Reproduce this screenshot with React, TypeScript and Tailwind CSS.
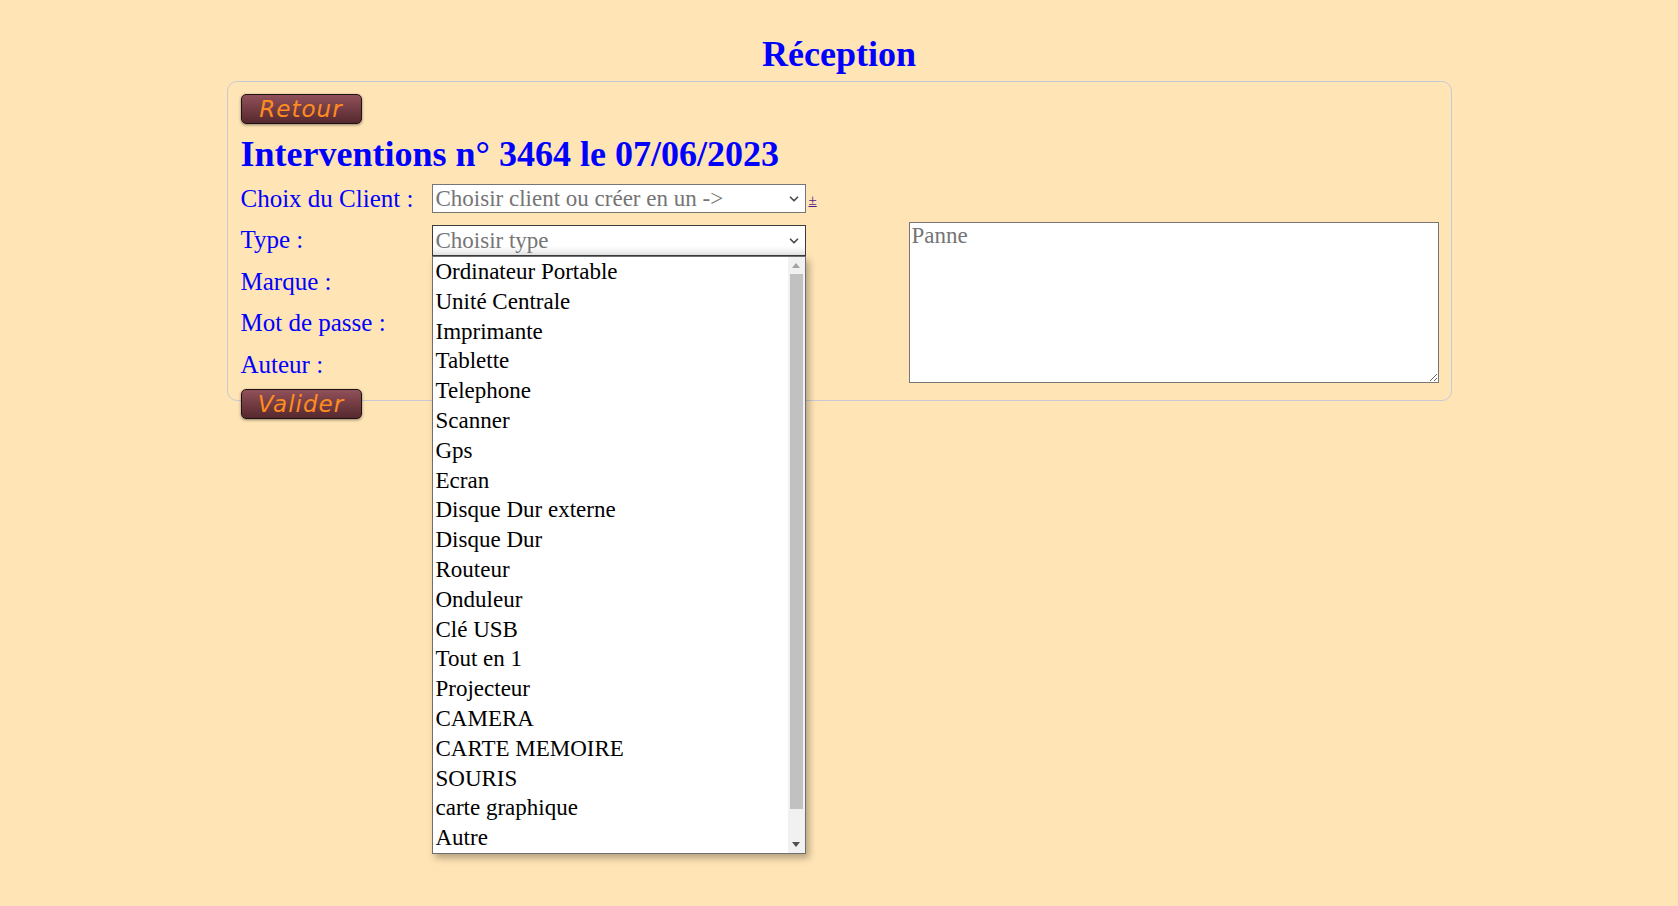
import { ChevronDown } from 'lucide-react'

const TYPES = [
  'Ordinateur Portable',
  'Unité Centrale',
  'Imprimante',
  'Tablette',
  'Telephone',
  'Scanner',
  'Gps',
  'Ecran',
  'Disque Dur externe',
  'Disque Dur',
  'Routeur',
  'Onduleur',
  'Clé USB',
  'Tout en 1',
  'Projecteur',
  'CAMERA',
  'CARTE MEMOIRE',
  'SOURIS',
  'carte graphique',
  'Autre',
]

const serif = "font-['Liberation_Serif','Times_New_Roman',serif]"

function FancyButton({ label }: { label: string }) {
  return (
    <button
      type="button"
      className="h-[30px] w-[121px] rounded-[5px] border border-[#1e1214] bg-gradient-to-b from-[#915059] to-[#56292f] shadow-[0_1px_3px_rgba(0,0,0,0.45)] font-['DejaVu_Sans',sans-serif] text-[23px] italic leading-[28px] tracking-[1px] text-[#ff8c1e]"
    >
      {label}
    </button>
  )
}

function FakeSelect({ text, open }: { text: string; open?: boolean }) {
  return (
    <div
      className={
        open
          ? 'flex h-[31px] w-[374px] items-center justify-between border border-[#3c3c3c] bg-gradient-to-b from-white from-70% to-[#e4e4e4] pl-[3px] pr-[4px]'
          : 'flex h-[29px] w-[374px] items-center justify-between border border-[#767676] bg-white pl-[3px] pr-[4px]'
      }
    >
      <span className="text-[23px] leading-[27px] text-[#757575]">{text}</span>
      <ChevronDown size={14} strokeWidth={3} className="text-[#4d4d4d]" />
    </div>
  )
}

function Label({ text }: { text: string }) {
  return <span className="w-[191px] shrink-0 text-[25px] leading-[29px] text-[#0000ff]">{text}</span>
}

function TypeList() {
  return (
    <div className="absolute left-0 top-full z-10 flex h-[598px] w-[374px] border border-[#6f6f6f] bg-white shadow-[3px_4px_7px_rgba(0,0,0,0.3)]">
      <ul className="flex-1">
        {TYPES.map((t) => (
          <li key={t} className="h-[29.8px] pl-[3px] text-[23px] leading-[29.8px] text-black">
            {t}
          </li>
        ))}
      </ul>
      <div className="flex w-[17px] flex-col bg-[#f1f1f1]">
        <div className="flex h-[17px] items-center justify-center">
          <svg width="8" height="5" viewBox="0 0 8 5"><polygon points="4,0 8,5 0,5" fill="#a3a3a3" /></svg>
        </div>
        <div className="flex-1 px-[2px]">
          <div className="h-[535px] bg-[#c1c1c1]" />
        </div>
        <div className="flex h-[17px] items-center justify-center">
          <svg width="8" height="5" viewBox="0 0 8 5"><polygon points="0,0 8,0 4,5" fill="#505050" /></svg>
        </div>
      </div>
    </div>
  )
}

export default function App() {
  return (
    <div className={`min-h-[906px] w-full bg-[#ffe4b5] ${serif}`}>
      <h1 className="pt-[34px] text-center text-[36px] font-bold leading-[41px] text-[#0000ff]">Réception</h1>

      <div className="mx-auto mt-[6px] h-[320px] w-[1225px] rounded-[10px] border border-[#c6cbd3] pl-[13px] pr-[11px] pt-[12px]">
        <FancyButton label="Retour" />
        <h2 className="mt-[10px] text-[36px] font-bold leading-[41px] text-[#0000ff]">
          Interventions n° 3464 le 07/06/2023
        </h2>

        <div className="mt-[9px] flex items-start">
          <Label text="Choix du Client :" />
          <FakeSelect text="Choisir client ou créer en un ->" />
          <a href="#" className="ml-[3px] mt-[7px] text-[15px] leading-[18px] text-[#551a8b] underline">±</a>
        </div>

        <div className="mt-[9px] flex items-start">
          <div className="w-[565px] shrink-0 pt-[3px]">
            <div className="flex h-[41.5px] items-start">
              <Label text="Type :" />
              <div className="relative">
                <FakeSelect text="Choisir type" open />
                <TypeList />
              </div>
            </div>
            <div className="flex h-[41.5px] items-start">
              <Label text="Marque :" />
              <FakeSelect text="" />
            </div>
            <div className="flex h-[41.5px] items-start">
              <Label text="Mot de passe :" />
              <FakeSelect text="" />
            </div>
            <div className="flex h-[29px] items-start">
              <Label text="Auteur :" />
              <FakeSelect text="" />
            </div>
            <div className="mt-[10px]">
              <FancyButton label="Valider" />
            </div>
          </div>

          <textarea
            placeholder="Panne"
            className="ml-[103px] h-[161px] w-[530px] border border-[#767676] bg-white px-[2px] py-0 text-[23px] leading-[25px] placeholder:text-[#757575] focus:outline-none"
          />
        </div>
      </div>
    </div>
  )
}
